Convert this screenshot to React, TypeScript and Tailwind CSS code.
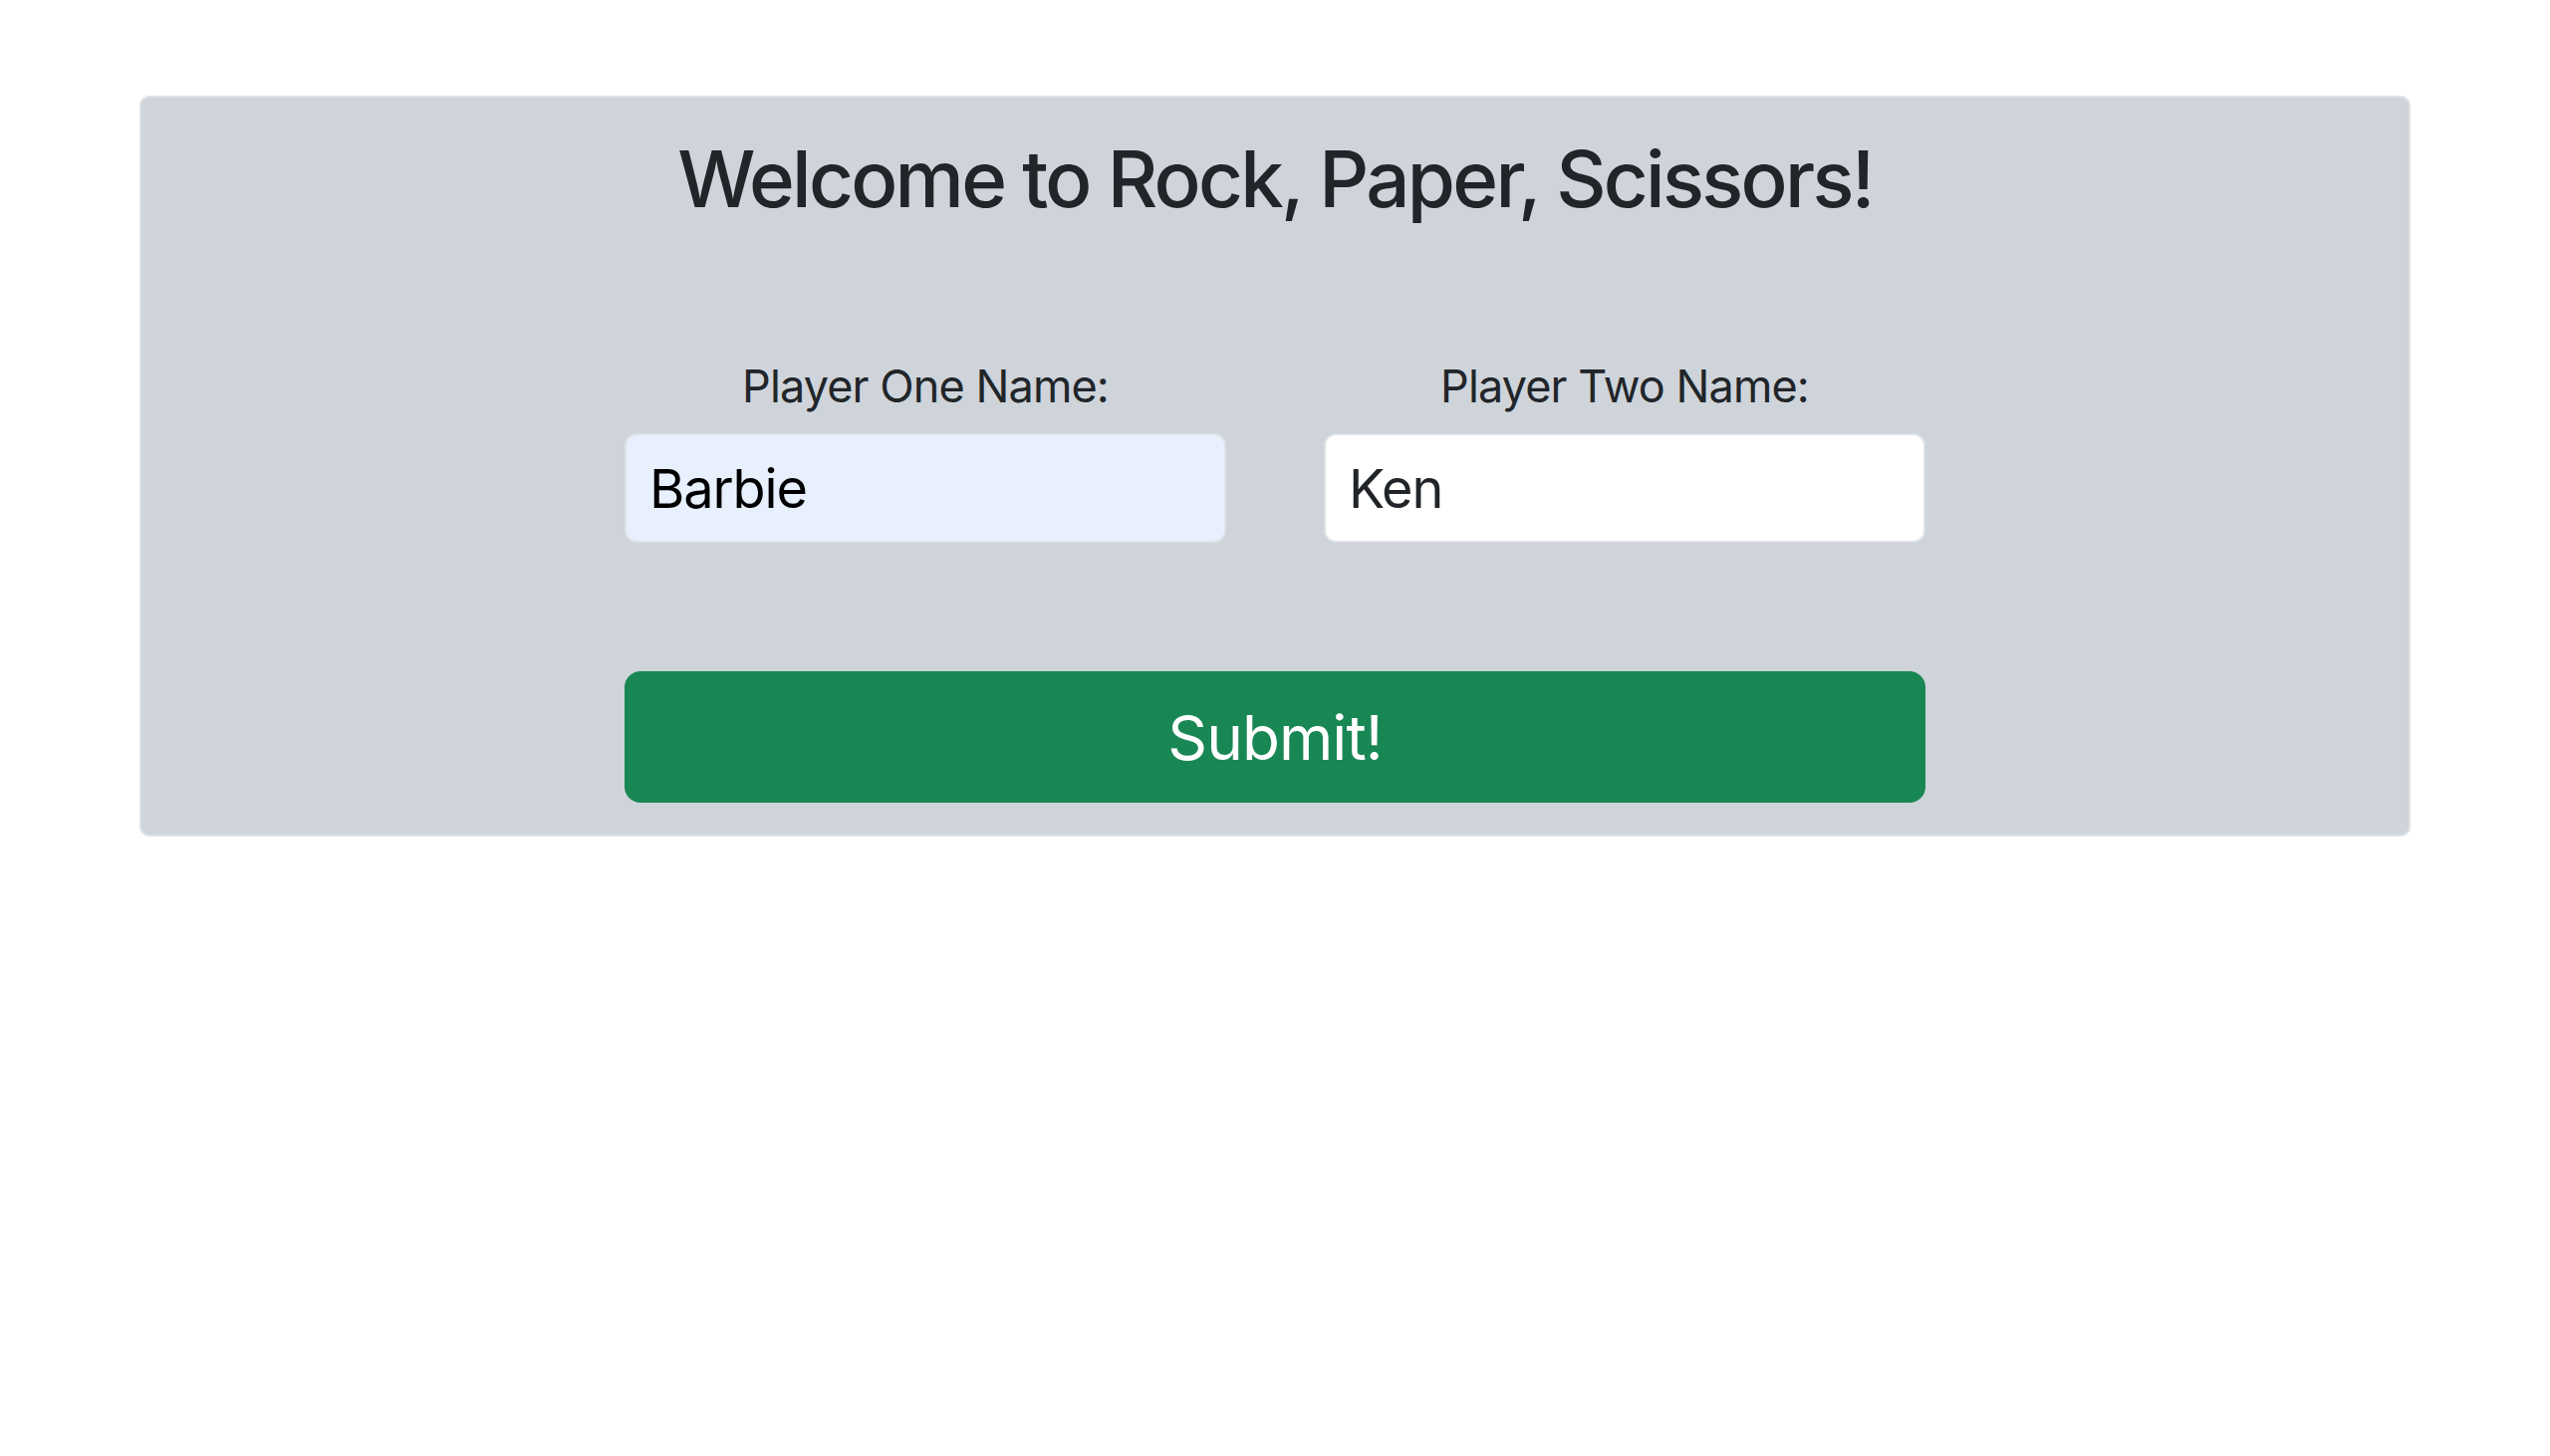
import * as React from "react";

function NameField({ label, value, autofilled }: { label: string; value: string; autofilled?: boolean }) {
  const [text, setText] = React.useState(value);
  return (
    <label className="flex w-[604px] flex-col items-center">
      <span className="text-[45px] leading-[69px] tracking-[-0.02em] text-[#212529]">{label}</span>
      <input
        value={text}
        onChange={(e) => setText(e.target.value)}
        className={
          "mt-[13px] h-[110px] w-full rounded-[12px] border-2 border-[#dee2e6] px-[23px] text-[54px] tracking-[-0.02em] outline-none " +
          (autofilled ? "bg-[#e8f0fe] text-black" : "bg-white text-[#212529]")
        }
      />
    </label>
  );
}

export default function App() {
  return (
    <div className="min-h-screen bg-white font-['Inter','Noto_Sans',sans-serif]">
      <div className="mx-[140px] pt-[96px]">
        <div className="flex flex-col items-center rounded-[10px] border-2 border-[#dee2e6] bg-[#ced4da] pb-[32px] pt-[34px]">
          <h1 className="text-[78px] font-medium leading-[96px] tracking-[-0.035em] text-[#212529]">
            Welcome to Rock, Paper, Scissors!
          </h1>
          <div className="mt-[125px] flex gap-[98px]">
            <NameField label="Player One Name:" value="Barbie" autofilled />
            <NameField label="Player Two Name:" value="Ken" />
          </div>
          <button
            type="button"
            className="mt-[129px] h-[132px] w-[1306px] rounded-[16px] bg-[#198754] text-[62px] tracking-[-0.015em] text-white"
          >
            Submit!
          </button>
        </div>
      </div>
    </div>
  );
}
